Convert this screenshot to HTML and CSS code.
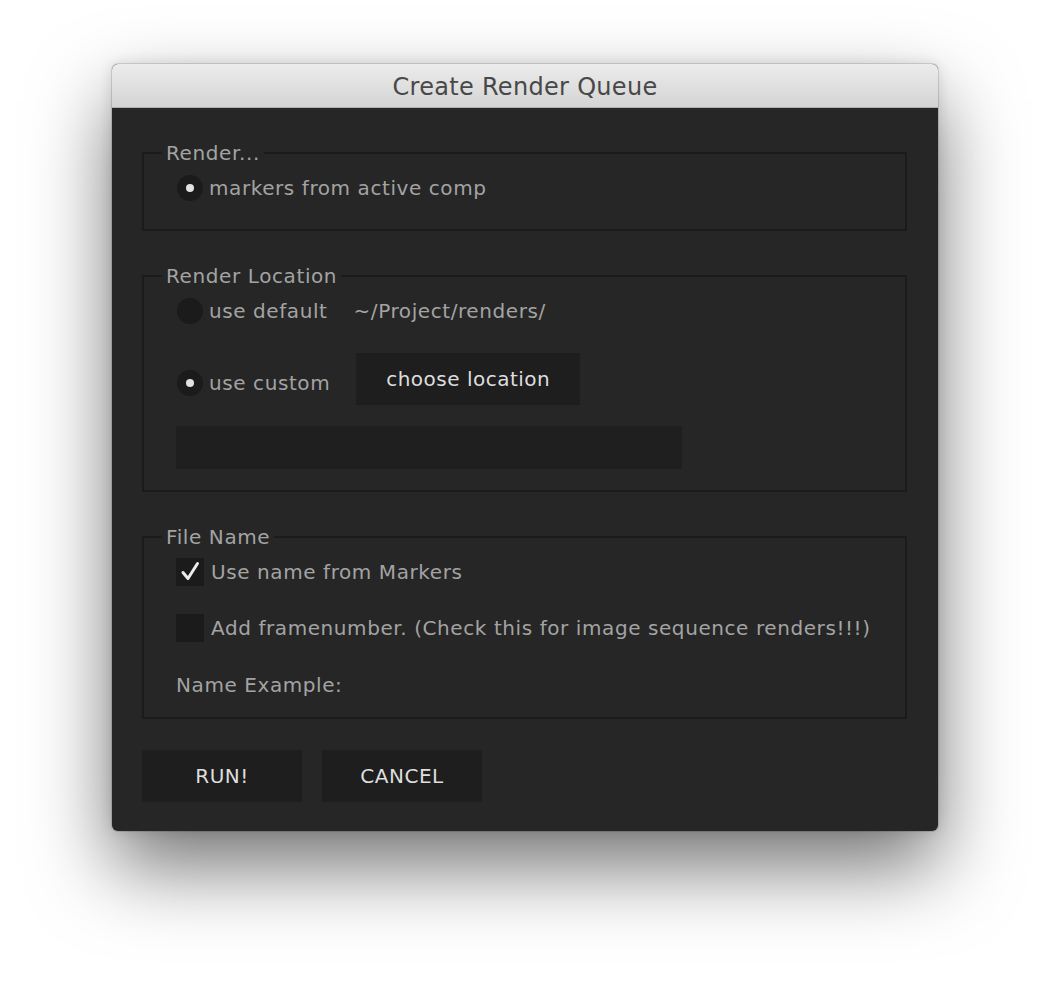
FILE: index.html
```html
<!DOCTYPE html>
<html>
<head>
<meta charset="utf-8">
<link rel="stylesheet" href="styles.css">
</head>
<body>
<div class="stage">
  <div class="window">
    <div class="titlebar">Create Render Queue</div>
    <div class="content">
      <fieldset class="panel">
        <legend>Render...</legend>
        <div class="panel-body p1">
          <div class="row">
            <span class="radio on"></span><span class="label">markers from active comp</span>
          </div>
        </div>
      </fieldset>

      <fieldset class="panel">
        <legend>Render Location</legend>
        <div class="panel-body p2">
          <div class="row">
            <span class="radio"></span><span class="label">use default</span><span class="path">~/Project/renders/</span>
          </div>
          <div class="row row-tall">
            <div class="radio-group">
              <span class="radio on"></span><span class="label">use custom</span>
            </div>
            <div class="btn btn-choose">choose location</div>
          </div>
          <div class="textfield"></div>
        </div>
      </fieldset>

      <fieldset class="panel">
        <legend>File Name</legend>
        <div class="panel-body p3">
          <div class="row">
            <span class="check"><svg width="28" height="28" viewBox="0 0 28 28"><path d="M7 14.5 L12 20.5 L21.5 5.5" fill="none" stroke="#ececec" stroke-width="3" stroke-linecap="round" stroke-linejoin="round"/></svg></span><span class="label">Use name from Markers</span>
          </div>
          <div class="row">
            <span class="check"></span><span class="label">Add framenumber. (Check this for image sequence renders!!!)</span>
          </div>
          <div class="row">
            <span class="label plain">Name Example:</span>
          </div>
        </div>
      </fieldset>

      <div class="actions">
        <div class="btn btn-action">RUN!</div>
        <div class="btn btn-action">CANCEL</div>
      </div>
    </div>
  </div>
</div>
</body>
</html>
```

FILE: styles.css
```css
* { box-sizing: border-box; }

html, body {
  margin: 0;
  padding: 0;
  background: #ffffff;
}

body {
  font-family: "DejaVu Sans", "Liberation Sans", sans-serif;
  width: 1050px;
  height: 992px;
  overflow: hidden;
}

.stage {
  padding: 64px 0 0 112px;
}

.window {
  width: 826px;
  height: 767px;
  border-radius: 6px;
  overflow: hidden;
  background: #262626;
  box-shadow: 0 36px 80px rgba(0, 0, 0, 0.55), 0 0 14px rgba(0, 0, 0, 0.12), 0 0 0 1px rgba(0, 0, 0, 0.12);
  display: flex;
  flex-direction: column;
}

.titlebar {
  height: 44px;
  flex: none;
  background: linear-gradient(#ececec, #d4d4d4);
  border-bottom: 1px solid #b0b0b0;
  color: #484848;
  font-size: 24px;
  letter-spacing: 0.3px;
  text-align: center;
  line-height: 46px;
}

.content {
  padding: 33px 31px 0 30px;
  display: flex;
  flex-direction: column;
}

.panel {
  margin: 0 0 33px 0;
  padding: 0;
  border: 2px solid #1b1b1b;
  min-width: 0;
}

.panel legend {
  margin-left: 18px;
  padding: 0 4px;
  font-size: 20px;
  letter-spacing: 0.6px;
  line-height: 24px;
  color: #a3a3a3;
}

.panel-body {
  padding: 8px 0 0 32px;
  display: flex;
  flex-direction: column;
}

.p1 { padding-bottom: 26px; }
.p2 { padding-bottom: 21px; gap: 27px; }
.p3 { padding-bottom: 18px; gap: 26px; }

.row {
  height: 30px;
  display: flex;
  align-items: center;
}

.row-tall {
  height: 52px;
}

.radio-group {
  display: flex;
  align-items: center;
  margin-top: 8px;
}

.label {
  font-size: 20px;
  letter-spacing: 0.58px;
  color: #a3a3a3;
  white-space: nowrap;
}

.label.plain {
  margin-top: 2px;
}

.radio {
  width: 26px;
  height: 26px;
  border-radius: 50%;
  background: #1b1b1b;
  margin: 0 6px 0 1px;
  flex: none;
  display: flex;
  align-items: center;
  justify-content: center;
}

.radio.on::after {
  content: "";
  width: 8px;
  height: 8px;
  border-radius: 50%;
  background: #e2e2e2;
}

.path {
  margin-left: 26px;
  font-size: 20px;
  letter-spacing: 0.58px;
  color: #a3a3a3;
}

.check {
  width: 28px;
  height: 28px;
  background: #1b1b1b;
  flex: none;
  margin-right: 7px;
  display: flex;
}

.btn {
  background: #1e1e1e;
  color: #dedede;
  font-size: 20px;
  letter-spacing: 0.5px;
  display: flex;
  align-items: center;
  justify-content: center;
}

.btn-choose {
  width: 224px;
  height: 52px;
  margin-left: 26px;
}

.textfield {
  width: 506px;
  height: 43px;
  margin-top: -6px;
  background: #1f1f1f;
}

.actions {
  display: flex;
  gap: 20px;
  margin-top: -2px;
}

.btn-action {
  width: 160px;
  height: 52px;
}
```
